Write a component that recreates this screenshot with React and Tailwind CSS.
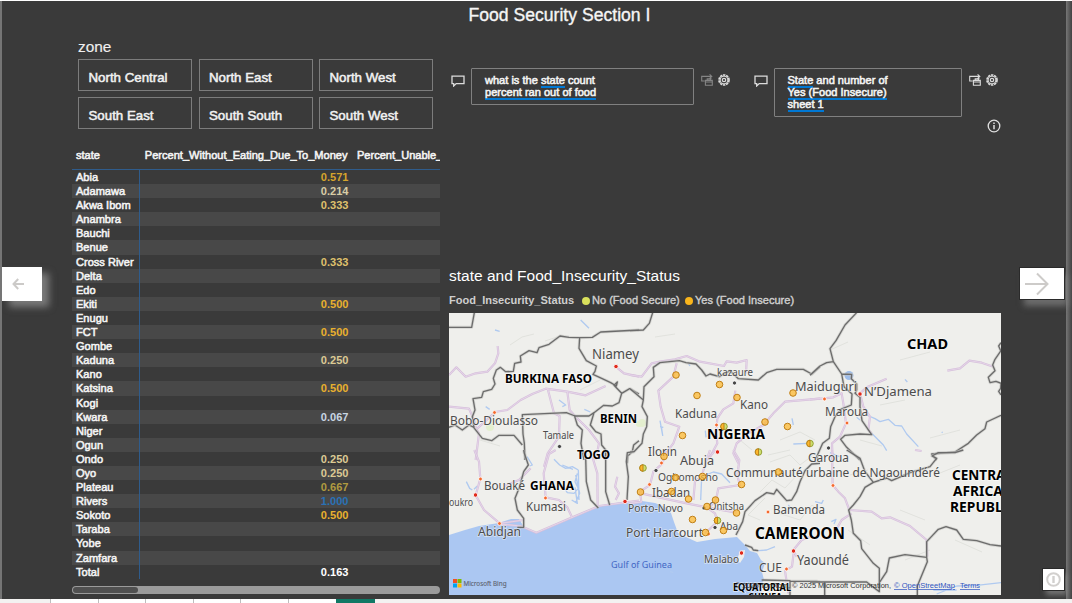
import React from "react";

const zones = ["North Central", "North East", "North West", "South East", "South South", "South West"];

const rows = [
  ["Abia", "0.571", "text-[#d6a42c]"],
  ["Adamawa", "0.214", "text-[#d8cda6]"],
  ["Akwa Ibom", "0.333", "text-[#dfc06c]"],
  ["Anambra"],
  ["Bauchi"],
  ["Benue"],
  ["Cross River", "0.333", "text-[#dfc06c]"],
  ["Delta"],
  ["Edo"],
  ["Ekiti", "0.500", "text-[#e8b02e]"],
  ["Enugu"],
  ["FCT", "0.500", "text-[#e8b02e]"],
  ["Gombe"],
  ["Kaduna", "0.250", "text-[#dcca94]"],
  ["Kano"],
  ["Katsina", "0.500", "text-[#e8b02e]"],
  ["Kogi"],
  ["Kwara", "0.067", "text-[#c9d6e2]"],
  ["Niger"],
  ["Ogun"],
  ["Ondo", "0.250", "text-[#dcca94]"],
  ["Oyo", "0.250", "text-[#dcca94]"],
  ["Plateau", "0.667", "text-[#b09a40]"],
  ["Rivers", "1.000", "text-[#2a72b5]"],
  ["Sokoto", "0.500", "text-[#e8b02e]"],
  ["Taraba"],
  ["Yobe"],
  ["Zamfara"],
  ["Total", "0.163", "text-white"],
];

/* Each sheet is one sector of the map, drawn at three times its size. */
const sheets = [
  {
    at: "translate(449 310) scale(.33333)",
    roads: [
      "M0 195L22 172L50 200L80 190L115 185L138 160L148 130L146 108",
      "M0 290L60 296L75 330L82 360",
      "M137 306L175 300L215 270L250 252L290 236L355 245L410 256L470 228",
      "M296 236L315 310L332 318L330 380L296 430L285 470",
      "M355 245L362 300L380 320L420 360L450 400L440 450",
      "M500 170L525 190L570 200",
      "M65 330L90 370L80 450",
      "M80 360L137 308",
    ],
    borders: [
      "M0 52L68 52L76 8",
      "M0 352L18 345L40 360L60 345L75 352L70 320L78 300L72 266L98 262L103 245L128 238L138 222L133 205L142 180L154 172L170 185L193 184L197 160L216 156L214 138L240 122L264 128L270 113L300 103L333 78L360 82L392 83L430 82L455 66L570 60",
      "M392 83L390 115L412 152L442 168L438 184L432 193L458 205L485 218L502 228L505 216L495 226L518 250L510 278L490 288L464 286L435 308L420 318L378 318L352 308L220 314L222 372L226 400L228 450",
      "M72 350L100 385L128 392L150 376L195 376L220 405",
      "M376 316L385 345L400 360L396 400L405 450",
      "M435 308L424 345L440 365L456 372L458 405L470 420L468 450",
      "M518 250L542 236L570 252",
      "M570 392L554 405L550 425L536 438L535 460",
    ],
    rivers: ["M395 30L420 55", "M138 60L152 64", "M330 270L350 285L340 290", "M110 290L122 298", "M406 298L424 306"],
  },
  {
    at: "translate(630 310) scale(.33333)",
    roads: [
      "M0 195L35 200L65 160L90 155L135 148L170 138L210 155L282 168L290 154L320 158L350 150L348 190",
      "M140 160L130 200L85 242L92 290L105 335L148 350L130 400L100 440",
      "M316 242L310 280L280 298L262 325L258 370L262 400L235 450",
      "M570 266L465 275L430 310L400 345L355 370L320 400L310 430L325 460",
    ],
    borders: [
      "M0 62L40 60L58 40L68 8",
      "M0 236L40 270L36 290L52 320L50 350L40 372L36 400L12 425L0 425",
      "M40 270L42 230L72 200L70 172L90 158L148 152L168 158L198 162L215 180L228 198L240 192L268 200L300 182L325 206L385 210L410 188L440 178L520 178L545 192L570 170",
    ],
    rivers: ["M90 332L98 376L94 350M90 350L100 352", "M486 325L490 345", "M490 402L535 400", "M226 362L228 382", "M176 162L180 168"],
  },
  {
    at: "translate(810 310) scale(.33333)",
    roads: [
      "M412 182L450 175L478 152L515 158L550 170",
      "M0 268L42 265L70 262L95 250L100 280L108 340L90 380L66 400L68 450",
      "M150 250L160 290L180 320L175 360L185 370",
      "M150 250L170 232L230 206",
      "M315 420L335 423",
    ],
    borders: [
      "M140 8L105 45L78 92L60 116L70 155L50 158L30 168L0 196",
      "M70 155L95 192L125 193L124 206L140 222L140 240L135 250L150 262L150 290L156 332L185 374L150 372L105 376L92 388L110 412L150 450",
      "M95 192L102 230L126 252L124 285L92 298L75 320L62 350L58 385L38 400L20 440L24 450",
      "M573 122L555 148L548 165L555 182L535 202L540 218L558 214L573 220",
      "M573 316L530 336L525 356L500 375L475 400L435 426L365 432L380 450",
      "M573 98L566 108L572 122M573 220L572 235L566 244L573 255",
    ],
    rivers: ["M170 315L195 326L210 335L235 328L255 346L275 348L290 372L325 410", "M185 370L220 405L230 422", "M285 208L292 216", "M140 322L150 330", "M60 428L88 440", "M395 366L398 368"],
  },
  {
    at: "translate(449 450) scale(.33333)",
    roads: [
      "M76 0L90 35L94 86L80 136L105 180L152 220L190 215L225 210",
      "M320 0L300 12L284 70L290 142L330 150L355 172L370 204",
      "M430 20L445 70L446 170",
      "M505 80L498 110L510 130L500 150",
      "M152 222L215 228L262 248L370 202L450 168L570 152",
      "M245 55L210 90L165 108",
    ],
    borders: [
      "M224 0L226 10L238 45L224 65L212 110L198 145L205 180L224 205L224 232L205 232",
      "M402 0L410 20L412 95L425 150L448 174",
      "M470 0L470 125L482 165",
      "M555 5L535 8L532 35L538 80L534 150",
    ],
    rivers: [
      "M315 28L332 45L350 55L370 50L388 60M385 70L378 95L388 115L375 130L355 128L344 112M378 112L385 160L368 150M388 60L390 150",
      "M380 75L392 130L380 158M340 45L372 58",
      "M234 20L250 45L242 48",
      "M52 95L62 115L70 120M85 108L75 118",
    ],
  },
  {
    at: "translate(630 450) scale(.33333)",
    roads: [
      "M106 0L98 40L70 65L60 105L30 125L34 156L0 160",
      "M256 0L240 20M240 0L225 45L215 78L195 95L190 150",
      "M34 130L100 145L170 160L230 172L255 190L262 215L225 250",
      "M310 0L328 30L322 78L330 105L265 115L258 150L240 170",
      "M500 320L490 300L515 270L540 260M492 300L486 350L465 362L475 430",
      "M230 172L320 188",
    ],
    borders: [
      "M570 40L545 42L525 62L510 95L500 125L485 150L470 152L455 135L440 118L432 132L410 128L375 152L345 185L338 215L318 255",
      "M395 390L480 392L480 435M480 394L560 394L570 396",
      "M345 285L365 292L370 300L385 302",
    ],
    rivers: ["M215 80L250 66L275 72L300 98", "M215 82L212 150", "M475 165L488 182", "M385 302L410 300L435 290", "M120 365L130 368", "M245 432L258 426"],
  },
  {
    at: "translate(810 450) scale(.33333)",
    roads: [
      "M66 0L68 105L85 125L105 145L118 180L185 185L215 205L240 202L300 228L350 270L352 320",
      "M125 190L95 210L78 240",
    ],
    borders: [
      "M110 0L150 25L165 65L190 97L230 84L245 92L300 68L360 50L380 25L366 18L385 8L435 8L460 0",
      "M190 97L165 112L150 140L130 165L116 180L124 210L130 250L152 272L155 296L190 340L208 355L208 425L190 412L170 396L0 396M44 396L44 435",
      "M208 398L230 365L238 324L285 314L350 322L352 335L322 408L322 435",
      "M350 322L350 275L385 238L408 230L440 240L460 268L500 272L540 284L573 288",
    ],
    rivers: ["M380 432L440 408L500 406L573 398", "M15 155L35 160L40 150", "M64 215L78 208L72 222", "M370 420L440 420"],
  },
];

// label, x, baseline, drawn length, font size
const cities = [
  ["Niamey", 592, 359, 47, 14.2],
  ["Bobo-Dioulasso", 450, 425, 88, 12.8],
  ["Tamale", 543, 439, 31, 10],
  ["kazaure", 717, 376, 36, 10],
  ["Maiduguri", 795, 391, 62, 13],
  ["N’Djamena", 864, 396, 68, 13.4],
  ["Kano", 740, 409, 28, 12.6],
  ["Kaduna", 675, 418, 42, 12.6],
  ["Maroua", 825, 416, 43, 12.6],
  ["Ilorin", 648, 456, 29, 12.8],
  ["Abuja", 680, 465, 34, 13.2],
  ["Garoua", 808, 462, 41, 12.6],
  ["Ogbomosho", 658, 481, 60, 11.2],
  ["Communauté urbaine de Ngaoundéré", 726, 477, 214, 12.8],
  ["Bouaké", 484, 490, 41, 12.8],
  ["oukro", 449, 506, 24, 10.6],
  ["Kumasi", 526, 511, 40, 12.6],
  ["Ibadan", 652, 497, 38, 12.8],
  ["Porto-Novo", 628, 512, 55, 11],
  ["Onitsha", 709, 510, 35, 11],
  ["Aba", 720, 530, 18, 11.5],
  ["Bamenda", 773, 514, 52, 12.6],
  ["Port Harcourt", 626, 537, 77, 13],
  ["Abidjan", 478, 536, 43, 13.2],
  ["Malabo", 704, 563, 35, 10.8],
  ["CUE", 759, 572, 23, 13],
  ["Yaoundé", 797, 565, 52, 14],
];

const countries = [
  ["BURKINA FASO", 505, 383, 87, 12.6],
  ["CHAD", 907, 348.5, 41, 14.2],
  ["BENIN", 600, 423, 37, 12.6],
  ["TOGO", 577, 459, 33, 12.8],
  ["NIGERIA", 707, 438.5, 58, 15],
  ["GHANA", 530, 489.5, 44, 12.8],
  ["CAMEROON", 755, 538.5, 90, 15.6],
  ["CENTRAL", 952, 479.5, 61, 14.4],
  ["AFRICAN", 953, 495.5, 61, 14.4],
  ["REPUBLIC", 950, 511.5, 67, 14.4],
  ["EQUATORIAL", 733, 590.5, 58, 9.8],
  ["GUINEA", 748, 600.5, 34, 9.8],
];

const bubbles = [
  [676, 375], [719.5, 384.5], [697, 395.5], [737, 397.5], [793, 393], [765, 422],
  [787.5, 426.5], [682.5, 435.5], [664, 456.5], [702.5, 476.5], [675.5, 477.5],
  [778.5, 472], [741.5, 484.5], [640.5, 492], [671.5, 491.5], [688.5, 499],
  [715.5, 500], [707, 506.5], [736.5, 513], [692.5, 519.5], [705.5, 532.5], [723.5, 530.5],
];
const splitBubbles = [[724, 426.5], [810, 443.5], [758.5, 452], [643, 468], [717.5, 520.5]];

const redDots = [[616, 366.5], [860, 394], [717.5, 452], [475.5, 495], [625, 501.5], [741.5, 553], [793.5, 551]];
const orangeDots = [[494.5, 412.5], [716.5, 425], [824.5, 399], [847, 423], [480.5, 479], [545.5, 498], [499.5, 523.5], [661.5, 463], [649.5, 484.5], [768, 512], [833, 485.5], [786.5, 569], [708.5, 534]];
const grayDots = [[559.5, 446.5], [734.5, 383], [828.5, 448], [656, 470.5], [704, 508], [715, 527.5]];

function Label({ item, halo }) {
  const [text, x, y, length, size] = item;
  return (
    <text
      x={x}
      y={y}
      fontSize={size}
      textLength={length}
      lengthAdjust="spacingAndGlyphs"
      stroke={halo}
      strokeWidth="1.6"
      strokeOpacity="0.6"
      paintOrder="stroke"
    >
      {text}
    </text>
  );
}

function Relief() {
  return (
    <g stroke="#dddeda" fill="none" strokeWidth="1" opacity=".8">
      <path d="M510 345L522 337L534 334M545 341L560 336M655 337L675 334M830 350L848 342M900 360L930 352M780 440L800 432L815 440M770 462L790 455L800 465L812 456M760 492L772 480L785 488L800 472M775 512L800 520L812 505L824 515M850 475L868 470M880 405L905 400M930 438L960 430M860 440L882 446M935 475L960 465M765 498L748 515L760 520M848 530L870 545M900 510L925 520M790 450L768 455M740 440L752 450M600 380L580 390M480 440L500 446M905 560L930 550M955 540L982 552" />
    </g>
  );
}

function BingMap() {
  return (
    <svg
      className="block h-[282px] w-[552px] shrink-0 font-['Noto_Sans',sans-serif]"
      viewBox="449 313 552 282"
    >
      <rect x="449" y="313" width="552" height="282" fill="#efefec" />
      <Relief />
      <g fill="#e4efcf">
        <circle cx="642" cy="423" r="4" />
        <circle cx="490" cy="427" r="4" />
        <circle cx="639" cy="424" r="3" />
      </g>
      <path
        fill="#abc7f2"
        d="M449 535L465 530L479 526L499 523L511 519L519 519L524 527L536 533L549 528L572 518L596 508L607 504L624 502L642 501L655 503L665 507L671 513L674 522L678 533L688 538L697 542L715 539L737 537L746 546L750 551L757 553L761 560L765 563L762 572L764 580L761 586L762 595L449 595Z"
      />
      <path fill="#efefec" d="M737 560L740 551L745 550L744 557L740 563Z" />
      <circle cx="849" cy="375.5" r="4.5" fill="#8fb4ea" opacity=".85" />
      {sheets.map((s) => (
        <g key={s.at} transform={s.at} fill="none" strokeLinejoin="round">
          <path d={s.rivers.join("")} stroke="#b0caf0" strokeWidth="4" />
          <path d={s.roads.join("")} stroke="#d6bfdb" strokeWidth="6.5" />
          <path d={s.roads.join("")} stroke="#ecdfee" strokeWidth="2" />
          <path d={s.borders.join("")} stroke="#c4c4c2" strokeWidth="9" opacity=".6" />
          <path d={s.borders.join("")} stroke="#6c6c6c" strokeWidth="4" />
        </g>
      ))}
      <g stroke="#fff" strokeWidth=".8">
        {redDots.map(([x, y]) => <circle key={x} cx={x} cy={y} r="2.2" fill="#e02a1c" />)}
        {orangeDots.map(([x, y]) => <circle key={x} cx={x} cy={y} r="1.9" fill="#f5682c" />)}
        {grayDots.map(([x, y]) => <circle key={x} cx={x} cy={y} r="2.1" fill="#454545" />)}
      </g>
      <g fill="#4c4c4c">
        {cities.map((c) => <Label key={c[0]} item={c} halo="#f4f4f2" />)}
      </g>
      <g fill="#3f66c4">
        <Label item={["Gulf of Guinea", 611, 568, 61, 9.8]} halo="#abc7f2" />
      </g>
      <g fill="#000" className="font-bold">
        {countries.map((c) => <Label key={c[0]} item={c} halo="#fff" />)}
      </g>
      <g stroke="#c07f16" strokeWidth="1" fill="#fdb72b" fillOpacity=".72">
        {bubbles.map(([x, y]) => <circle key={`${x}-${y}`} cx={x} cy={y} r="3.3" />)}
      </g>
      {splitBubbles.map(([x, y]) => (
        <g key={x} transform={`translate(${x} ${y})`}>
          <circle r="3.3" fill="#c6d94f" fillOpacity=".8" stroke="#8d9a2b" strokeWidth=".9" />
          <path d="M0 -3.3A3.3 3.3 0 0 0 0 3.3Z" fill="#fdb72b" stroke="#b57a1a" strokeWidth=".9" />
        </g>
      ))}
      <g transform="translate(453 579)">
        <rect width="4" height="4" fill="#f25022" />
        <rect x="4.5" width="4" height="4" fill="#7fba00" />
        <rect y="4.5" width="4" height="4" fill="#00a4ef" />
        <rect x="4.5" y="4.5" width="4" height="4" fill="#ffb900" />
      </g>
      <text x="463.5" y="585.5" fontSize="7.3" textLength="43" lengthAdjust="spacingAndGlyphs" fill="#5f6673" stroke="#5f6673" strokeWidth=".15">Microsoft Bing</text>
      <g className="font-['Liberation_Sans',sans-serif]" fontSize="7.3" fill="#333">
        <text x="735" y="588" textLength="55" lengthAdjust="spacingAndGlyphs">© 2025 TomTom,</text>
        <text x="792" y="588" textLength="99" lengthAdjust="spacingAndGlyphs">© 2025 Microsoft Corporation,</text>
        <g fill="#3155c0" className="underline">
          <text x="894" y="588" textLength="61" lengthAdjust="spacingAndGlyphs">© OpenStreetMap</text>
          <text x="960" y="588" textLength="20" lengthAdjust="spacingAndGlyphs">Terms</text>
        </g>
      </g>
    </svg>
  );
}

function ChatIcon() {
  return (
    <svg className="mt-[7px] block h-3 w-3.5 shrink-0" viewBox="0 0 14 12" fill="none" stroke="#dcdcdc" strokeWidth="1.3">
      <path d="M1 1.1H13V8.6H5.2L2.7 11V8.6H1Z" />
    </svg>
  );
}

function ConvertIcon({ className }) {
  return (
    <svg className={`block h-3 w-3 ${className}`} viewBox="0 0 12 12" fill="none" stroke="currentColor" strokeWidth="1.1">
      <path d="M3.6 7H.7V2.4H10.2V4.4M8.6 .4L10.8 2.4L8.6 4.4M4.4 6.4H11.3V11.2H4.4ZM4.4 8H11.3M6.2 6.2V4.9H9.6V6.2" />
    </svg>
  );
}

function GearIcon() {
  return (
    <svg className="block h-3 w-3" viewBox="0 0 12 12" fill="none" stroke="#dcdcdc">
      <circle cx="6" cy="6" r="5" strokeWidth="1.7" strokeDasharray="2.4 .74" />
      <circle cx="6" cy="6" r="3.9" strokeWidth="1" />
      <circle cx="6" cy="6" r="1.7" strokeWidth="1.2" />
    </svg>
  );
}

function Underlined({ children }) {
  return (
    <span className="bg-linear-to-t from-[#0078d4] from-[1.6px] to-transparent to-[1.6px] pb-[2px]">{children}</span>
  );
}

function Slicer() {
  return (
    <div className="pl-1.5">
      <h2 className="h-[21px] text-[15.4px] leading-[18px] text-[#f0f0f0] [-webkit-text-stroke:0.15px]">zone</h2>
      <div className="grid w-[355px] grid-cols-3 gap-x-[6.5px] gap-y-[6px]">
        {zones.map((z) => (
          <button
            key={z}
            className="flex h-8 items-center border border-[#7c7c7c] pt-[5px] pl-[9.5px] text-left text-[13.3px] leading-4 text-[#f2f2f2] [-webkit-text-stroke:0.5px]"
          >
            {z}
          </button>
        ))}
      </div>
    </div>
  );
}

function StateTable() {
  return (
    <div className="mt-3 w-[368px] overflow-hidden text-[11.05px] text-[#f4f4f4] [-webkit-text-stroke:0.55px]">
      <div className="flex h-[29px] items-center border-b border-[#2f5c8c] whitespace-nowrap">
        <span className="w-[68px] shrink-0 pl-1">state</span>
        <span className="w-[212px] shrink-0 pr-[4.5px] text-right">Percent_Without_Eating_Due_To_Money</span>
        <span className="shrink-0 pl-[5px]">Percent_Unable_</span>
      </div>
      {rows.map(([name, value, tone], i) => (
        <div key={name} className={`flex h-[14.1px] items-center leading-[14px] ${i % 2 ? "bg-[#484848]" : ""}`}>
          <span className="h-full w-[68px] shrink-0 border-r border-[#2f5c8c] pl-1">{name}</span>
          <span className={`w-[208.5px] text-right font-bold [-webkit-text-stroke:0] ${tone || ""}`}>{value}</span>
        </div>
      ))}
      <div className="mt-[7px] h-2 rounded-full bg-[#9b9b9b] p-px">
        <div className="h-1.5 w-[65px] rounded-full bg-[#505050]" />
      </div>
    </div>
  );
}

function Questions() {
  return (
    <div className="flex h-[50px] items-start pl-0.5 text-[11.05px] leading-[12.2px] text-[#f4f4f4] [-webkit-text-stroke:0.55px]">
      <ChatIcon />
      <div className="ml-1.5 h-[37px] w-[223px] rounded-[1px] border border-[#808080] py-[5.5px] pl-[13px]">
        what is the <Underlined>state</Underlined> count
        <br />
        <Underlined>percent ran out of food</Underlined>
      </div>
      <div className="mt-1.5 ml-[7px] flex gap-[5px]">
        <ConvertIcon className="text-[#858585]" />
        <GearIcon />
      </div>
      <div className="ml-6 flex">
        <ChatIcon />
        <div className="ml-[5.5px] h-[49px] w-[188.5px] rounded-[1px] border border-[#808080] py-[5.5px] pl-[13px]">
          <Underlined>State</Underlined> and number of
          <br />
          <Underlined>Yes (Food Insecure)</Underlined>
          <br />
          <Underlined>sheet 1</Underlined>
        </div>
        <div className="mt-1.5 ml-[7px] flex gap-[5px]">
          <ConvertIcon className="text-[#dcdcdc]" />
          <GearIcon />
        </div>
      </div>
    </div>
  );
}

function BottomTabs() {
  return (
    <div className="flex h-1 bg-[#f3f2f1] pl-[50px]">
      {[0, 1, 2, 3, 4, 5].map((n) => (
        <div key={n} className="w-[47.6px] border-l border-[#bdbdbd] bg-white" />
      ))}
      <div className="w-[39px] bg-[#117865]" />
    </div>
  );
}

export default function App() {
  return (
    <div className="flex h-[603px] w-[1072px] flex-col overflow-hidden bg-white pt-px font-['Liberation_Sans',Arial,sans-serif]">
      <main className="relative flex h-[598px] shrink-0 flex-col overflow-hidden border-l-2 border-[#757575] bg-[#3a3a3a]">
        <h1 className="h-[37px] pl-[466.5px] text-[17.6px] leading-[28px] text-[#f5f5f5] [-webkit-text-stroke:0.35px]">
          Food Security Section I
        </h1>
        <div className="flex pl-[70px]">
          <section className="w-[377px] shrink-0">
            <Slicer />
            <StateTable />
          </section>
          <section className="flex w-[552px] flex-col pt-[29.5px]">
            <Questions />
            <svg className="mt-px block h-3.5 w-3.5 self-end" viewBox="0 0 14 14" fill="none" stroke="#e0e0e0" strokeWidth="1.3">
              <circle cx="7" cy="7" r="5.8" />
              <path d="M7 6V10.2M7 3.6V5" strokeWidth="1.5" />
            </svg>
            <h2 className="mt-[134px] h-[17px] text-[15.5px] leading-[17px] text-white">
              state and Food_Insecurity_Status
            </h2>
            <div className="mt-[9px] flex h-4 items-center text-[11.05px] text-[#cfcfcf] [-webkit-text-stroke:0.4px]">
              <span className="w-[133px] text-[11.05px] font-bold [-webkit-text-stroke:0]">Food_Insecurity_Status</span>
              <span className="mr-0.5 h-2 w-2 rounded-full bg-[#d9e05c]" />
              <span className="w-[93px]">No (Food Secure)</span>
              <span className="mr-0.5 h-2 w-2 rounded-full bg-[#f9b51c]" />
              <span>Yes (Food Insecure)</span>
            </div>
            <div className="pt-[4.5px]">
              <BingMap />
            </div>
          </section>
        </div>

        <div className="absolute inset-y-0 right-0 w-[6px] bg-linear-to-r from-[#777777] to-[#424242]" />
        <button className="absolute top-[266px] left-0 h-[34px] w-10 bg-white pl-2.5 shadow-[7px_6px_7px_rgba(150,150,150,0.7)]">
          <svg className="h-3 w-3" viewBox="0 0 12 12" fill="none" stroke="#cccac8" strokeWidth="2">
            <path d="M6.2 1L1.5 6L6.2 11M1.5 6H12" />
          </svg>
        </button>
        <button className="absolute top-[267px] left-[1018px] h-[31px] w-11 bg-white pl-[5px] shadow-[4px_7px_6px_rgba(130,130,130,0.7)] outline-1 outline-[#2a2a2a]">
          <svg className="h-6 w-6" viewBox="0 0 24 24" fill="none" stroke="#cdcbc9" strokeWidth="2">
            <path d="M0 12H22.5M12 1.5L22.5 12L12 22.5" />
          </svg>
        </button>
        <button className="absolute top-[568px] left-[1041px] flex h-[21px] w-[21px] items-center justify-center bg-white shadow-[3px_5px_5px_rgba(140,140,140,0.7)] outline-1 outline-[#2a2a2a]">
          <svg className="h-[15px] w-[15px]" viewBox="0 0 15 15" fill="none" stroke="#d2d0ce" strokeWidth="2">
            <circle cx="7.5" cy="7.5" r="6.3" />
            <path d="M7.5 4V11" strokeWidth="2.4" />
          </svg>
        </button>
      </main>
      <BottomTabs />
    </div>
  );
}
